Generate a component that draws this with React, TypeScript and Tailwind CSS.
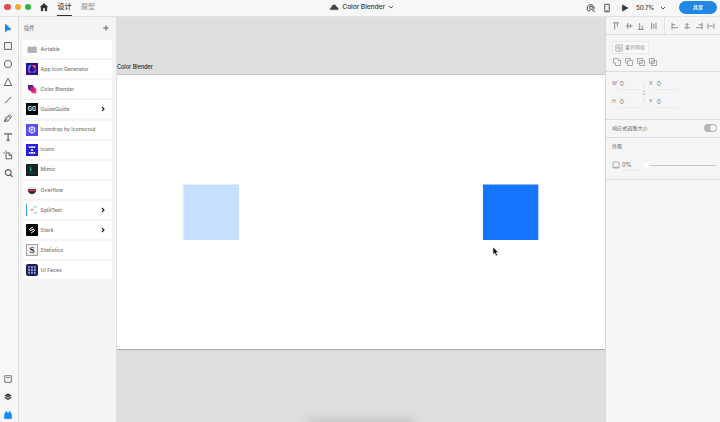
import React from "react";

type IconProps = { d: string; className?: string; fill?: string; width?: number; children?: React.ReactNode };

function Icon({ d, className = "", fill = "none", width = 0.9, children }: IconProps) {
  return (
    <svg viewBox="0 0 10 10" className={`h-[10px] w-[10px] shrink-0 ${className}`} fill={fill} stroke="currentColor" strokeWidth={width}>
      <path d={d} />
      {children}
    </svg>
  );
}

const tools = [
  { d: "M2.5 1.2V8.8L4.6 6.8 8 6.6Z", fill: "#1583ea", className: "text-[#1583ea]" },
  { d: "M1.6 1.6H8.4V8.4H1.6Z" },
  { d: "M5 1.4A3.6 3.6 0 1 1 5 8.6A3.6 3.6 0 1 1 5 1.4Z" },
  { d: "M5 1.3L8.8 8.5H1.2Z" },
  { d: "M2 8.2L8.3 1.8" },
  { d: "M1.6 8.5L2.6 4.6 5.6 3.1 7.2 4.9 5.6 7.7ZM1.6 8.5L4.6 5.4M5.6 3.1L6.6 1.7 8.7 3.7 7.2 4.9" },
  { d: "M2 3V1.8H8.2V3M5.1 1.8V8.4M3.7 8.4H6.5", width: 1.1 },
  { d: "M3 2.9H6.3L8.6 5.2V8.8H3ZM6.1 3V5.4H8.5M3 .4V1.9M.4 2.9H2" },
  { d: "M5.2 1.6A2.9 2.9 0 1 1 5.2 7.4A2.9 2.9 0 1 1 5.2 1.6ZM7.3 6.7L9.5 9", width: 1.1 },
];

const plugins: { name: string; arrow?: boolean; icon: React.ReactNode }[] = [
  {
    name: "Airtable",
    icon: (
      <g>
        <path d="M1.5 4H10.8V10H1.5Z" fill="#b0b0b0" />
        <path d="M2.6 2.7H5.2V3.6H2.6ZM7 2.7H9.6V3.6H7Z" fill="#b8b8b8" />
      </g>
    ),
  },
  {
    name: "App Icon Generator",
    icon: (
      <g fill="none" strokeWidth="1.6">
        <path d="M0 0H12V12H0Z" fill="#36088f" />
        <path d="M5.3 2.8H4.4Q3 2.8 3 4.2V6.5" stroke="#35aef5" />
        <path d="M3 6.5V7.8Q3 9.2 4.4 9.2H5.3" stroke="#875cff" />
        <path d="M6.6 2.8H7.6Q9 2.8 9 4.2V5.6" stroke="#ff715c" />
        <path d="M9 6.4V7.8Q9 9.2 7.6 9.2H6.6" stroke="#4a63f5" />
      </g>
    ),
  },
  {
    name: "Color Blender",
    icon: (
      <g>
        <path d="M2 2H6.5L8 4V8H4L2 6Z" fill="#5c168b" />
        <path d="M5 4.2H8.5L10.3 6V10.3H6.6L4.3 8Z" fill="#ef327f" />
        <path d="M4.7 4.1H8V7.7H4.7Z" fill="#b72375" />
      </g>
    ),
  },
  {
    name: "GuideGuide",
    arrow: true,
    icon: (
      <g>
        <path d="M0 0H12V12H0Z" fill="#030303" />
        <text x="6" y="8" textAnchor="middle" fontSize="5.6" fontWeight="700" fill="#fff" fontFamily="Inter, sans-serif">GG</text>
      </g>
    ),
  },
  {
    name: "Icondrop by Iconscout",
    icon: (
      <g>
        <path d="M0 0H12V12H0Z" fill="#5a4df0" />
        <path d="M6 2L9.3 3.8V7.8L6 9.8 2.7 7.8V3.8Z" fill="#dddaff" />
        <circle cx="6" cy="5.9" r="1.8" fill="none" stroke="#5a4df0" strokeWidth=".8" />
        <path d="M6 6L7.8 7.5" stroke="#5a4df0" strokeWidth=".8" />
      </g>
    ),
  },
  {
    name: "Icons",
    icon: (
      <g>
        <path d="M0 0H12V12H0Z" fill="#241be5" />
        <path d="M2.8 3.2H9.2M2.8 8.8H9.2" stroke="#fff" strokeWidth="1.7" strokeDasharray="1.8 .5" />
        <circle cx="6" cy="6" r="1.1" fill="#fff" />
      </g>
    ),
  },
  {
    name: "Mimic",
    icon: (
      <g>
        <path d="M0 0H12V12H0Z" fill="#142426" />
        <path d="M4.4 2.6V6.9L6 5.3" fill="none" stroke="#20b88b" strokeWidth="1" />
        <path d="M3 8.8H5.5M6.5 8.8H9" stroke="#39786e" strokeWidth=".5" />
      </g>
    ),
  },
  {
    name: "Overflow",
    icon: (
      <g>
        <path d="M1.9 4.2Q6 1 10.1 4.2V6H1.9Z" fill="#dedede" />
        <path d="M1.7 5.2H10.3Q10 9.9 6 9.9Q2 9.9 1.7 5.2Z" fill="#29262a" />
        <path d="M1.8 5.4Q6 6.4 10.2 5.4L9.8 6.9Q6 7.9 2.2 6.9Z" fill="#bf273c" />
      </g>
    ),
  },
  {
    name: "SplitText",
    arrow: true,
    icon: (
      <g fill="none">
        <path d="M.5 0V12" stroke="#3d9dce" />
        <path d="M4.8 5.7H7.3" stroke="#d64050" />
        <path d="M8.2 2.8H11.5M8.2 9.1H11.5" stroke="#65bfca" strokeWidth=".8" />
        <path d="M8.3 3V4.2M8.3 7.8V9" stroke="#9cbfc6" strokeWidth=".6" />
      </g>
    ),
  },
  {
    name: "Stark",
    arrow: true,
    icon: (
      <g fill="none">
        <rect width="12" height="12" rx=".8" fill="#000" />
        <path d="M6.9 2.9L3.6 5.1Q3.1 6 4.3 6.5L5.3 5.8M5.1 9L8.4 6.8Q8.9 5.9 7.8 5.3L6.7 6.1M4.6 6.6L7.5 5.2" stroke="#fff" strokeWidth="1" />
      </g>
    ),
  },
  {
    name: "Statistics",
    icon: (
      <g>
        <rect x=".5" y=".5" width="11" height="11" fill="#efefef" stroke="#a4a4a4" />
        <text x="6" y="9" textAnchor="middle" fontSize="9" fontWeight="700" fill="#252525" fontFamily="Liberation Serif, serif">S</text>
      </g>
    ),
  },
  {
    name: "UI Faces",
    icon: (
      <g>
        <rect width="12" height="12" rx="2" fill="#202052" />
        <path d="M2.1 3.2H9.9M2.1 6H9.9M2.1 8.8H9.9" stroke="#7f9fee" strokeWidth="1.9" strokeDasharray="1.9 1" />
      </g>
    ),
  },
];

const alignLeft = [
  "M2 1.7H8M3.7 2V8.5M6.3 2V5.5",
  "M1.7 5H8.5M3.7 2V8M6.4 3.2V6.8",
  "M2 8.4H8M3.7 2V8M6.3 4.4V8",
  "M2.6 1.8V8.2M7 1.8V8.2M4.8 2.7V7.4",
];
const alignRight = [
  "M2 1.8V8.2M2 3.7H5.3M2 6.8H8",
  "M5 1.8V8.2M3.4 3.7H6.6M2 6.8H8",
  "M8 1.8V8.2M4.7 3.7H8M2 6.8H8",
  "M2 2.5V7.8M8 2.5V7.8M3 5H7",
];
const booleans = [
  "M1.5 1.5H6V3.5H8.5V8.5H3.5V6H1.5Z",
  "M1.5 1.5H6.3V3.5M1.5 1.5V6H3.5M3.5 3.5H8.5V8.5H3.5Z",
  "M1.5 1.5H6.3V6.3H1.5ZM3.7 3.7H8.5V8.5H3.7Z",
  "M1.5 1.5H6.3V6.3H1.5ZM3.7 3.7H8.5V8.5H3.7ZM4.5 5.8L5.8 4.5",
];

function Field({ label }: { label: string }) {
  return (
    <div className="flex h-[12px] w-[29px] items-center text-[6px] text-[#777]">
      <span className="w-[6px] text-[5px]">{label}</span>
      <span className="flex h-full flex-1 items-center border-b border-[#ebebeb] pl-[2px]">0</span>
    </div>
  );
}

function Header() {
  return (
    <header className="flex h-[16px] shrink-0 bg-[#f7f7f7] text-[#444]">
      <div className="flex w-[329px] shrink-0">
        <div className="flex items-center gap-[4px] pb-[2px] pl-[4.4px]">
          <i className="h-[6.2px] w-[6.2px] rounded-full bg-[#df4c50]" />
          <i className="h-[6.2px] w-[6.2px] rounded-full bg-[#f0ac30]" />
          <i className="h-[6.2px] w-[6.2px] rounded-full bg-[#27b83d]" />
        </div>
        <Icon d="M1 5L5 1.2 9 5H8V9H6V6H4V9H2V5Z" fill="#333" width={0.3} className="ml-[8px] mt-[2px]" />
        <div className="ml-[8px] h-[16px] w-[15px] border-b border-[#333] text-center text-[7px] font-medium leading-[14px] whitespace-nowrap text-[#333]">设计</div>
        <div className="ml-[8.5px] w-[15px] text-center text-[7px] font-medium leading-[14px] whitespace-nowrap text-[#999]">原型</div>
      </div>
      <div className="flex h-[14px] flex-1 items-center">
        <Icon d="M1.3 7.8Q.5 5.8 2.5 5.2Q3 2.2 5.4 2.7Q7 2.9 7.4 4.7Q9.6 5.3 9 7.8Z" fill="#444" width={0.3} />
        <span className="ml-[3.3px] text-[6.8px] font-medium tracking-[-.02em]">Color Blender</span>
        <Icon d="M2.8 4L5 6L7.2 4" className="ml-[1px]" />
      </div>
      <div className="flex w-[134px] shrink-0 items-center pb-[1px]">
        <Icon d="M2.9 8.4A3.6 3.6 0 1 1 8.1 6.6M3.5 8Q3.4 6.8 4.4 6.4Q3.3 5.2 3.6 3.8Q5 2.4 6.4 3.8Q6.7 5.2 5.6 6.4L8.8 8.7" width={0.9} className="text-[#333]" />
        <Icon d="M2.8 1.3H7.2V8.8H2.8ZM4.3 7.6H5.7" className="ml-[6px]" />
        <Icon d="M2.3 1.8V8.2L8.2 5Z" fill="#333" width={0.5} className="ml-[8px]" />
        <span className="ml-[6px] w-[18px] text-[6.1px] font-medium tracking-[-.02em] text-[#333]">50.7%</span>
        <Icon d="M3 4L5 6L7 4" className="ml-[4px]" />
        <span className="ml-[11px] flex h-[13px] w-[38px] shrink-0 items-center justify-center rounded-full bg-[#2187e7] text-[5px] font-bold text-white">共享</span>
      </div>
    </header>
  );
}

function PluginPanel() {
  return (
    <aside className="w-[98px] shrink-0 border-r border-[#dedede] bg-[#f4f4f4] pl-[4px]">
      <div className="flex h-[23px] w-[89px] items-center justify-between text-[5.2px] text-[#666]">
        <span className="pl-[1px]">插件</span>
        <Icon d="M5 2.3V7.7M2.3 5H7.7" className="mb-[2px] mr-[1px] text-[#555]" />
      </div>
      <div className="flex w-[89px] flex-col gap-[2.13px]">
        {plugins.map(({ name, arrow, icon }) => (
          <div key={name} className="flex h-[18px] shrink-0 items-center bg-white pl-[3px]">
            <svg viewBox="0 0 12 12" className="h-[12px] w-[12px] shrink-0">{icon}</svg>
            <span className="ml-[2.6px] flex-1 whitespace-nowrap pt-[1.2px] text-[5.15px] font-medium text-[#757575]">{name}</span>
            {arrow && <Icon d="M4 3L6 5L4 7" width={1.1} className="mr-[4px] text-[#222]" />}
          </div>
        ))}
      </div>
    </aside>
  );
}

function Canvas() {
  return (
    <main className="relative flex w-[488px] shrink-0 flex-col overflow-hidden bg-[#dedede]">
      <div className="flex h-[56.5px] shrink-0 items-end pb-[3px] text-[5.5px] font-medium leading-[8px] text-[#222]">Color Blender</div>
      <div className="relative h-[276.5px] shrink-0 border-y border-[#c5c5c5] border-b-[#aaa] bg-white">
        <svg viewBox="0 0 356 56" className="absolute left-[66px] top-[109.5px] h-[56px] w-[356px]">
          <path d="M.3 .5H56V56H.3Z" fill="#c6dfff" />
          <path d="M300 .5H355.3V56H300Z" fill="#1675ff" />
        </svg>
        <svg viewBox="0 0 8 12" className="absolute left-[375px] top-[171px] h-[12px] w-[8px]">
          <path d="M1 1V8.5L2.7 7L4 10L5.5 9.3L4.2 6.5H6.5Z" fill="#111" stroke="#fff" strokeWidth=".5" />
        </svg>
      </div>
      <div className="absolute bottom-[-7px] left-[190px] h-[10px] w-[108px] rounded-full bg-[#c4c4c4] blur-[4px]" />
    </main>
  );
}

function Inspector() {
  return (
    <aside className="flex w-[115px] shrink-0 flex-col border-l border-[#d8d8d8] bg-[#f5f5f5] text-[#909090]">
      <div className="flex h-[18px] shrink-0 border-b border-[#dcdcdc]">
        <div className="flex w-[59px] items-center gap-[2.7px] border-r border-[#e1e1e1] pl-[5px]">
          {alignLeft.map((d) => <Icon key={d} d={d} width={1.05} />)}
        </div>
        <div className="flex items-center gap-[2.1px] pl-[4.5px]">
          {alignRight.map((d) => <Icon key={d} d={d} width={1.05} />)}
        </div>
      </div>
      <div className="h-[37px] shrink-0 border-b border-[#dcdcdc] pl-[6px] pt-[6px]">
        <div className="flex h-[13px] w-[37px] items-center border border-[#e8e8e8] bg-[#fafafa] pl-[1px]">
          <Icon d="M1.8 1.8H8.2V8.2H1.8ZM5 2V8M2 5H8M3 3.5H4M6 6.5H7" width={0.6} />
          <span className="ml-[1px] whitespace-nowrap text-[5px] text-[#999]">重复网格</span>
        </div>
        <div className="mt-[3px] flex gap-[2px]">
          {booleans.map((d) => <Icon key={d} d={d} width={0.75} />)}
        </div>
      </div>
      <div className="flex h-[48px] shrink-0 border-b border-[#dcdcdc] pl-[6px] pt-[6px]">
        <div className="flex flex-col gap-[6px]">
          <Field label="W" />
          <Field label="H" />
        </div>
        <svg viewBox="0 0 8 30" className="h-[30px] w-[8px] shrink-0" fill="none" stroke="#ddd" strokeWidth=".7">
          <path d="M1 5H3V11M3 19V24H1" />
          <path d="M2 14V13H4V14M2 15V16.5H4V15" stroke="#bbb" />
        </svg>
        <div className="flex flex-col gap-[6px]">
          <Field label="X" />
          <Field label="Y" />
        </div>
      </div>
      <div className="flex h-[18px] shrink-0 items-center justify-between border-b border-[#dcdcdc] pl-[6px] pr-[3px] text-[5.1px] text-[#666]">
        <span>响应式调整大小</span>
        <span className="mb-[1px] flex h-[8px] w-[13px] items-center justify-end rounded-full bg-[#b5b5b5] p-[1px]">
          <i className="h-[6px] w-[6px] rounded-full bg-[#f5f5f5]" />
        </span>
      </div>
      <div className="h-[42px] shrink-0 border-b border-[#dcdcdc] pl-[6px] pr-[4px] text-[#666]">
        <div className="pt-[4px] text-[5px] leading-[9px]">外观</div>
        <div className="mt-[8px] flex h-[12px] items-center">
          <Icon d="M2 2H8V8H2ZM2.5 7.3H7.5" width={0.6} className="relative left-[-1px] text-[#888]" />
          <span className="flex h-full w-[18px] items-center border-b border-[#ebebeb] pt-[1px] text-[5.8px]">0%</span>
          <span className="ml-[4px] h-[6px] w-[6px] rounded-full bg-white" />
          <span className="h-px flex-1 bg-[#c7c7c7]" />
        </div>
      </div>
    </aside>
  );
}

export default function App() {
  return (
    <div className="flex h-[422px] w-[720px] flex-col overflow-hidden font-['Inter','Noto_Sans_CJK_SC',sans-serif]">
      <Header />
      <div className="flex h-[406px] shrink-0 border-t border-[#e3e3e3]">
        <nav className="flex w-[19px] shrink-0 flex-col items-center justify-between border-r border-[#dcdcdc] bg-[#f7f7f7] pb-[2px] pr-[2px] pt-[6px] text-[#555]">
          <div className="flex flex-col gap-[8.1px]">
            {tools.map((tool) => <Icon key={tool.d} {...tool} />)}
          </div>
          <div className="flex flex-col gap-[8px]">
            <Icon d="M1.7 1.7H8.3V8.3H1.7ZM3.2 3.5H6.8" width={0.8} />
            <Icon d="M5 1.4L8.6 3.5L5 5.5L1.4 3.5ZM1.4 5.8L5 7.9L8.6 5.8L7.3 5.1L5 6.4L2.7 5.1Z" fill="#444" width={0.3} />
            <Icon d="M1.5 8.7V4L2.5 3V1.8H4V3H6V1.8H7.5V3L8.5 4V8.7Z" fill="#168aff" className="text-[#168aff]" width={0.5} />
          </div>
        </nav>
        <PluginPanel />
        <Canvas />
        <Inspector />
      </div>
    </div>
  );
}
